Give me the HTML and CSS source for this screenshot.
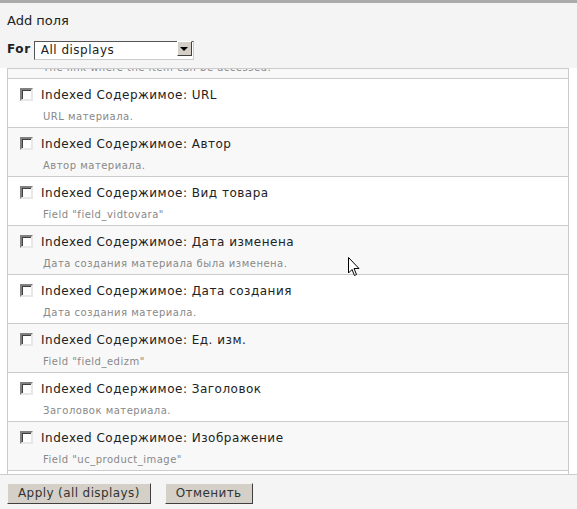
FILE: index.html
```html
<!DOCTYPE html>
<html lang="ru">
<head>
    <meta charset="UTF-8">
    <link rel="stylesheet" href="styles.css">
</head>
<body>
    <div class="header">
        <h2 class="title">Add поля</h2>
        <div class="for-row">
            <label class="for-label">For</label>
            <div class="select-wrap">
                <select class="select">
                    <option>All displays</option>
                </select>
                <span class="select-btn"><span class="arrow"></span></span>
            </div>
        </div>
    </div>

    <div class="list">
        <div class="row odd first">
            <div class="check"></div>
            <div class="text">
                <div class="name">Indexed Содержимое: Ссылка</div>
                <div class="desc">The link where the item can be accessed.</div>
            </div>
        </div>
        <div class="row">
            <div class="check"></div>
            <div class="text">
                <div class="name">Indexed Содержимое: URL</div>
                <div class="desc">URL материала.</div>
            </div>
        </div>
        <div class="row odd">
            <div class="check"></div>
            <div class="text">
                <div class="name">Indexed Содержимое: Автор</div>
                <div class="desc">Автор материала.</div>
            </div>
        </div>
        <div class="row">
            <div class="check"></div>
            <div class="text">
                <div class="name">Indexed Содержимое: Вид товара</div>
                <div class="desc">Field "field_vidtovara"</div>
            </div>
        </div>
        <div class="row odd">
            <div class="check"></div>
            <div class="text">
                <div class="name">Indexed Содержимое: Дата изменена</div>
                <div class="desc">Дата создания материала была изменена.</div>
            </div>
        </div>
        <div class="row">
            <div class="check"></div>
            <div class="text">
                <div class="name">Indexed Содержимое: Дата создания</div>
                <div class="desc">Дата создания материала.</div>
            </div>
        </div>
        <div class="row odd">
            <div class="check"></div>
            <div class="text">
                <div class="name">Indexed Содержимое: Ед. изм.</div>
                <div class="desc">Field "field_edizm"</div>
            </div>
        </div>
        <div class="row">
            <div class="check"></div>
            <div class="text">
                <div class="name">Indexed Содержимое: Заголовок</div>
                <div class="desc">Заголовок материала.</div>
            </div>
        </div>
        <div class="row odd">
            <div class="check"></div>
            <div class="text">
                <div class="name">Indexed Содержимое: Изображение</div>
                <div class="desc">Field "uc_product_image"</div>
            </div>
        </div>
        <div class="row">
            <div class="check"></div>
            <div class="text">
                <div class="name">Indexed Содержимое: Категория</div>
                <div class="desc">Категория материала.</div>
            </div>
        </div>
    </div>

    <div class="footer">
        <button class="btn">Apply (all displays)</button>
        <button class="btn">Отменить</button>
    </div>

    <svg class="cursor" width="12" height="20" viewBox="0 0 12 20">
        <path d="M0.5 0.5 L0.5 16 L4 12.5 L6.5 18.5 L8.5 17.5 L6 11.5 L11 11.5 Z" fill="#fff" stroke="#000" stroke-width="1"/>
    </svg>
</body>
</html>
```

FILE: styles.css
```css
body {
    margin: 0;
    padding: 0;
    background: #fff;
    font-family: "DejaVu Sans", Verdana, sans-serif;
    color: #333;
    position: relative;
    height: 509px;
    overflow: hidden;
}

.header {
    background: #f4f4f4;
    border-top: 3px solid #aaa;
    height: 65px;
    padding: 0 7px;
    position: relative;
    z-index: 1;
}

.title {
    margin: 0;
    padding-top: 10px;
    font-size: 13px;
    font-weight: normal;
    line-height: 16px;
    color: #222;
}

.for-row {
    display: flex;
    align-items: center;
    margin-top: 10px;
    gap: 3px;
}

.for-label {
    font-size: 12px;
    font-weight: bold;
    letter-spacing: 0.6px;
    color: #222;
}

.select-wrap {
    position: relative;
    width: 160px;
    height: 19px;
}

.select {
    appearance: none;
    -webkit-appearance: none;
    width: 100%;
    height: 19px;
    margin: 0;
    padding: 0 0 0 6px;
    border: 1px solid;
    border-color: #555 #ccc #ccc #555;
    border-radius: 0;
    background: #fff;
    font-family: "DejaVu Sans", Verdana, sans-serif;
    font-size: 12px;
    line-height: 17px;
    letter-spacing: 0.5px;
    color: #222;
}

.select-btn {
    position: absolute;
    right: 2px;
    top: 2px;
    width: 13px;
    height: 13px;
    background: #d4d0c8;
    border: 1px solid;
    border-color: #fff #404040 #404040 #fff;
    display: flex;
    align-items: center;
    justify-content: center;
}

.arrow {
    width: 0;
    height: 0;
    border-left: 4px solid transparent;
    border-right: 4px solid transparent;
    border-top: 4px solid #000;
}

.list {
    margin: 0 8px 0 7px;
    height: 405px;
    border: 1px solid #ccc;
    border-bottom: none;
    overflow: hidden;
}

.row {
    display: flex;
    align-items: flex-start;
    height: 48px;
    border-bottom: 1px solid #ccc;
    background: #fff;
}

.row.odd {
    background: #f8f8f8;
}

.row.first {
    margin-top: -39px;
}

.check {
    width: 9px;
    height: 9px;
    margin: 9px 0 0 12px;
    background: #fff;
    border: 2px solid;
    border-color: #808080 #e8e8e8 #e8e8e8 #808080;
    box-shadow: inset 1px 1px 0 #404040;
    flex-shrink: 0;
}

.text {
    margin-left: 8px;
    padding-top: 9px;
}

.name {
    font-size: 12px;
    line-height: 15px;
    letter-spacing: 0.5px;
    color: #222;
}

.desc {
    margin-top: 7px;
    margin-left: 2px;
    font-size: 10px;
    line-height: 13px;
    letter-spacing: 0.5px;
    color: #888;
}

.footer {
    border-top: 1px solid #ccc;
    background: #f4f4f4;
    height: 35px;
    padding: 8px 7px 0;
    display: flex;
    align-items: flex-start;
    gap: 14px;
    box-sizing: border-box;
}

.btn {
    height: 21px;
    margin: 0;
    padding: 0 10px;
    background: #d4d0c8;
    border: 1px solid;
    border-color: #f4f4f4 #404040 #404040 #f4f4f4;
    border-radius: 0;
    font-family: "DejaVu Sans", Verdana, sans-serif;
    font-size: 12px;
    line-height: 19px;
    letter-spacing: 0.4px;
    color: #333;
}

.cursor {
    position: absolute;
    left: 348px;
    top: 257px;
}
```
